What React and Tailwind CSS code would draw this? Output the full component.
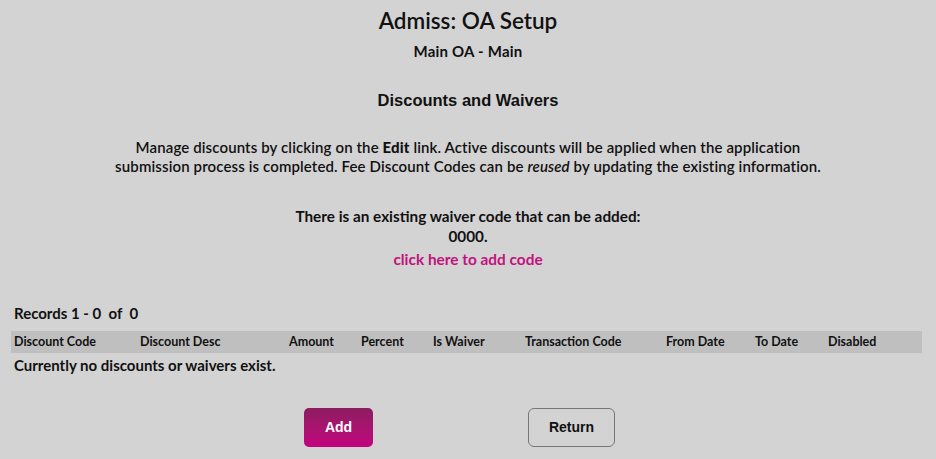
export default function App() {
  const cols = [
    ["Discount Code", "w-[126px]"],
    ["Discount Desc", "w-[149px]"],
    ["Amount", "w-[72px]"],
    ["Percent", "w-[72px]"],
    ["Is Waiver", "w-[92px]"],
    ["Transaction Code", "w-[141px]"],
    ["From Date", "w-[89px]"],
    ["To Date", "w-[73px]"],
    ["Disabled", "flex-1"],
  ];

  return (
    <div className="min-h-[459px] w-full bg-[#d3d3d3] text-[#111] font-['Lato','Noto_Sans',sans-serif]">
      <div className="flex flex-col items-center pt-[7px]">
        <h1 className="text-[22.5px] font-semibold leading-[28px]">Admiss: OA Setup</h1>
        <p className="mt-[7px] text-[15px] font-bold leading-[18px] tracking-[0.2px]">Main OA - Main</p>
        <h2 className="mt-[30px] text-[16.5px] font-bold leading-[20px] font-['Liberation_Sans',Arial,sans-serif]">
          Discounts and Waivers
        </h2>
        <p className="mt-[28px] text-center text-[15px] font-semibold leading-[19px] tracking-[0.12px]">
          Manage discounts by clicking on the <b className="font-black">Edit</b> link. Active discounts will be
          applied when the application
          <br />
          submission process is completed. Fee Discount Codes can be <i>reused</i> by updating the existing
          information.
        </p>
        <p className="mt-[30px] text-[15.3px] font-bold leading-[20px]">
          There is an existing waiver code that can be added:
        </p>
        <p className="text-[15.3px] font-bold leading-[20px]">0000.</p>
        <a className="mt-[3px] text-[15.4px] font-bold leading-[20px] text-[#c2127f] cursor-pointer">
          click here to add code
        </a>
      </div>

      <div className="pl-[11px] pr-[14px] mt-[35px]">
        <p className="pl-[3px] text-[15px] font-bold leading-[18px]">Records 1 - 0&nbsp; of&nbsp; 0</p>
        <div className="mt-[9px] flex items-center h-[22px] bg-[#bfbfbf] pl-[3px] text-[12.5px] font-bold">
          {cols.map(([label, w]) => (
            <div key={label} className={w}>
              {label}
            </div>
          ))}
        </div>
        <p className="pl-[3px] mt-[3px] text-[15px] font-bold leading-[18px]">
          Currently no discounts or waivers exist.
        </p>
      </div>

      <div className="mt-[34px] flex font-['Liberation_Sans',Arial,sans-serif] text-[14px] font-bold">
        <div className="ml-[304px] w-[69px] h-[39px] rounded-[5px] bg-gradient-to-b from-[#8c1b60] to-[#c4007f] text-white flex items-center justify-center">
          Add
        </div>
        <div className="ml-[155px] w-[87px] h-[39px] rounded-[6px] border border-[#777] flex items-center justify-center">
          Return
        </div>
      </div>
    </div>
  );
}
